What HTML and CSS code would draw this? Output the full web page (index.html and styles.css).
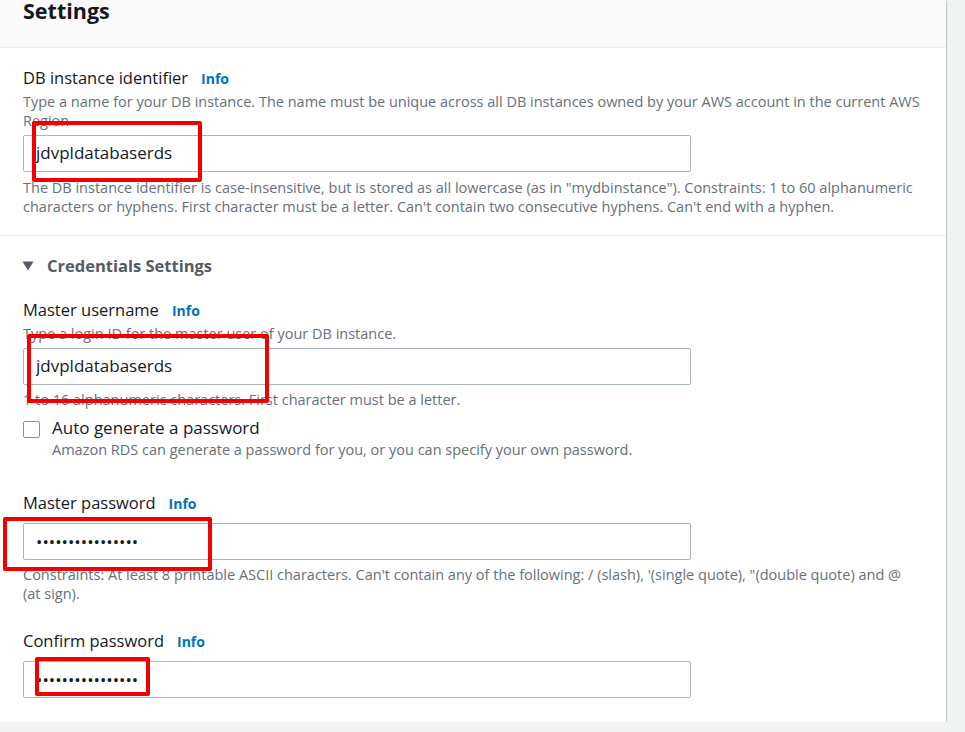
FILE: index.html
```html
<!DOCTYPE html>
<html lang="en">
<head>
<meta charset="utf-8">
<title>Settings</title>
<link rel="stylesheet" href="styles.css">
</head>
<body>
<div class="panel">
  <div class="panel-header"><h2 class="panel-title">Settings</h2></div>

  <div class="section section-id">
    <div class="field">
      <div class="label-row"><span class="label">DB instance identifier</span><a class="info">Info</a></div>
      <div class="desc">Type a name for your DB instance. The name must be unique across all DB instances owned by your AWS account in the current AWS Region</div>
      <input class="text-input" type="text" value="jdvpldatabaserds">
      <div class="hint">The DB instance identifier is case-insensitive, but is stored as all lowercase (as in "mydbinstance"). Constraints: 1 to 60 alphanumeric characters or hyphens. First character must be a letter. Can't contain two consecutive hyphens. Can't end with a hyphen.</div>
    </div>
  </div>

  <div class="section section-cred">
    <div class="expander">
      <svg class="caret" width="12" height="10" viewBox="0 0 12 10"><polygon points="0.5,0.5 11.5,0.5 6,9.5" fill="#545b64"/></svg>
      <span class="expander-title">Credentials Settings</span>
    </div>

    <div class="field field-user">
      <div class="label-row"><span class="label">Master username</span><a class="info">Info</a></div>
      <div class="desc">Type a login ID for the master user of your DB instance.</div>
      <input class="text-input" type="text" value="jdvpldatabaserds">
      <div class="hint">1 to 16 alphanumeric characters. First character must be a letter.</div>
    </div>

    <div class="checkbox-row">
      <span class="checkbox"></span>
      <div class="checkbox-text">
        <div class="checkbox-label">Auto generate a password</div>
        <div class="checkbox-desc">Amazon RDS can generate a password for you, or you can specify your own password.</div>
      </div>
    </div>

    <div class="field field-pass">
      <div class="label-row"><span class="label">Master password</span><a class="info">Info</a></div>
      <input class="text-input pw" type="password" value="abcdefghijklmnop">
      <div class="hint">Constraints: At least 8 printable ASCII characters. Can't contain any of the following: / (slash), '(single quote), "(double quote) and @ (at sign).</div>
    </div>

    <div class="field field-confirm">
      <div class="label-row"><span class="label">Confirm password</span><a class="info">Info</a></div>
      <input class="text-input pw" type="password" value="abcdefghijklmnop">
    </div>
  </div>

  <span class="mark mark-1"></span>
  <span class="mark mark-2"></span>
  <span class="mark mark-3"></span>
  <span class="mark mark-4"></span>
</div>
</body>
</html>
```

FILE: styles.css
```css
* { box-sizing: border-box; }

html, body {
  margin: 0;
  padding: 0;
  background: #f2f3f3;
  font-family: "Open Sans", "Noto Sans", "Liberation Sans", Arial, sans-serif;
  color: #16191f;
}

.panel {
  position: relative;
  width: 946px;
  height: 722px;
  background: #ffffff;
  box-shadow: 0 1px 1px 0 rgba(0, 28, 36, 0.3), 1px 1px 1px 0 rgba(0, 28, 36, 0.15);
}

.panel-header {
  height: 48px;
  padding: 0 23px;
  background: #fafafa;
  border-bottom: 1px solid #eaeded;
}

.panel-title {
  margin: 0;
  font-size: 21.5px;
  line-height: 21px;
  font-weight: 700;
  color: #16191f;
}

.section {
  padding: 0 20px 0 23px;
}

.section-id {
  padding-top: 19px;
  padding-bottom: 19px;
  border-bottom: 1px solid #eaeded;
}

.section-cred {
  padding-top: 19px;
}

.label-row {
  display: flex;
  align-items: baseline;
  height: 22px;
}

.label {
  font-size: 16.5px;
  line-height: 22px;
  color: #16191f;
}

.info {
  margin-left: 13px;
  font-size: 14px;
  font-weight: 700;
  color: #0073bb;
  cursor: pointer;
}

.desc, .hint, .checkbox-desc {
  font-size: 14.5px;
  line-height: 19px;
  color: #687078;
}

.hint {
  max-width: 895px;
}

.desc {
  margin-top: 3px;
}

.hint {
  margin-top: 6px;
}

.text-input {
  display: block;
  width: 668px;
  height: 37px;
  margin: 5px 0 0;
  padding: 0 12px 2px;
  border: 1px solid #aab7b8;
  border-radius: 2px;
  background: #ffffff;
  font-family: inherit;
  font-size: 17px;
  color: #16191f;
  outline: none;
}

.field-pass .text-input,
.field-confirm .text-input {
  margin-top: 9px;
}

.field-user .hint,
.field-pass .hint {
  margin-top: 5px;
}

.pw {
  padding-bottom: 0;
}

.expander {
  display: flex;
  align-items: center;
  height: 22px;
}

.caret {
  display: block;
  margin-left: -1px;
  margin-right: 13px;
}

.expander-title {
  font-size: 16.5px;
  line-height: 22px;
  font-weight: 700;
  color: #545b64;
}

.field-user {
  margin-top: 22px;
}

.checkbox-row {
  display: flex;
  align-items: flex-start;
  margin-top: 8px;
}

.checkbox {
  display: block;
  flex: none;
  width: 17px;
  height: 17px;
  margin-top: 4px;
  border: 1px solid #879596;
  border-radius: 2px;
  background: #ffffff;
}

.checkbox-text {
  margin-left: 12px;
}

.checkbox-label {
  font-size: 17px;
  line-height: 22px;
  color: #16191f;
}

.checkbox-desc {
  margin-top: 1px;
}

.field-pass {
  margin-top: 33px;
}

.field-confirm {
  margin-top: 27px;
}

.mark {
  position: absolute;
  border: 4px solid #f20000;
  border-radius: 2px;
  pointer-events: none;
}

.mark-1 { left: 32px; top: 121px; width: 170px; height: 61px; }
.mark-2 { left: 27px; top: 334px; width: 242px; height: 69px; }
.mark-3 { left: 3px; top: 517px; width: 209px; height: 54px; }
.mark-4 { left: 35px; top: 657px; width: 115px; height: 39px; }
```
